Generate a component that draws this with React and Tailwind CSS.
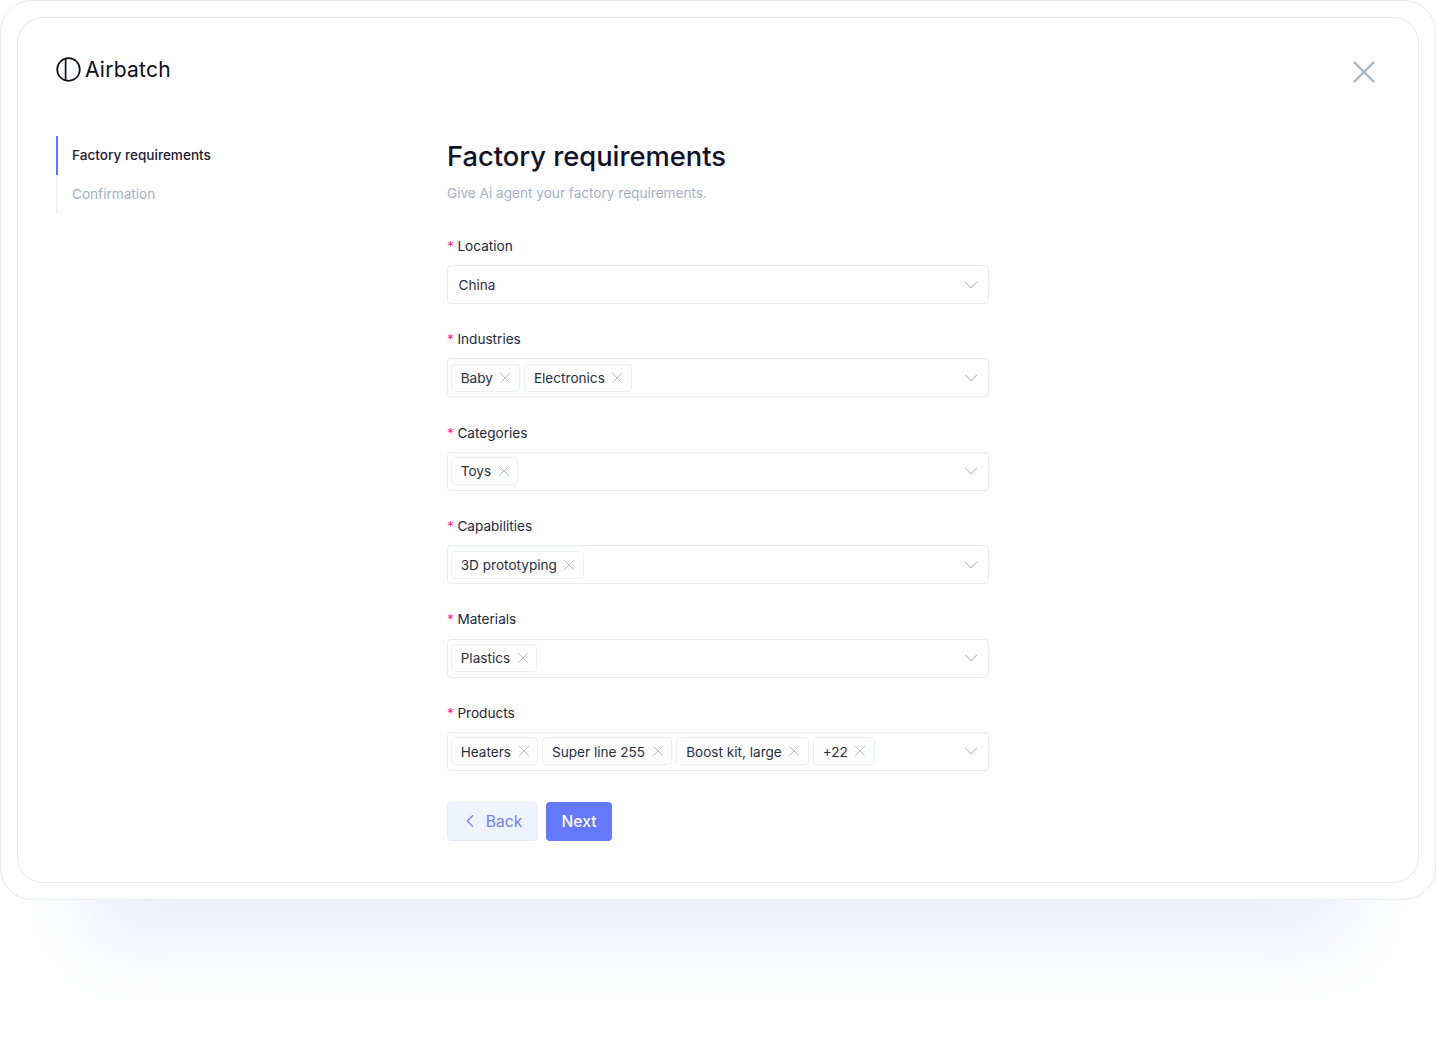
import { ChevronDown, ChevronLeft, X } from "lucide-react";

const fields = [
  { label: "Location", value: "China" },
  { label: "Industries", tags: ["Baby", "Electronics"] },
  { label: "Categories", tags: ["Toys"] },
  { label: "Capabilities", tags: ["3D prototyping"] },
  { label: "Materials", tags: ["Plastics"] },
  { label: "Products", tags: ["Heaters", "Super line 255", "Boost kit, large", "+22"] },
];

function Logo() {
  return (
    <div className="flex items-center gap-[4px] text-[#0b0d1e]">
      <svg width="25" height="25" viewBox="0 0 25 25" fill="none" stroke="currentColor" strokeWidth="1.7">
        <circle cx="12.5" cy="12.5" r="11.3" />
        <path d="M9.6 1.5v22" />
      </svg>
      <span className="h-[25px] text-[21px] leading-[25px] tracking-[0.25px]">Airbatch</span>
    </div>
  );
}

function Tag({ text }) {
  return (
    <span className="flex h-[28px] items-center gap-[3.5px] rounded-[4px] border border-[#edeff7] pl-[8.7px] pr-[4.8px] text-[13.6px] text-[#2a2e45]">
      <span className="pt-[0.8px]">{text}</span>
      <X size={18} strokeWidth={1.2} className="text-[#a9b3c9]" />
    </span>
  );
}

function Field({ field }) {
  return (
    <div className="mb-[25.4px]">
      <label className="mb-[9px] flex h-[20px] items-center text-[13.6px] text-[#23273c]">
        <span className="mr-[4.4px] w-[6px] text-[#ef2f88]">*</span>
        {field.label}
      </label>
      <div className="flex h-[39px] items-center justify-between rounded-[4px] border border-[#e8eaf3] pl-[3px] pr-[6.5px]">
        {field.value ? (
          <span className="pl-[7.5px] pt-[0.8px] text-[13.6px] text-[#2a2e45]">{field.value}</span>
        ) : (
          <div className="flex gap-[4px]">
            {field.tags.map((t) => (
              <Tag key={t} text={t} />
            ))}
          </div>
        )}
        <ChevronDown size={22} strokeWidth={1.1} className="text-[#a9b3c9]" />
      </div>
    </div>
  );
}

export default function App() {
  return (
    <div className="h-[1040px] w-[1436px] overflow-hidden bg-white font-['Inter',sans-serif]">
      <div className="h-[900px] rounded-[32px] border border-[#e7e8f5] bg-white p-[16px] shadow-[0_128px_70px_-88px_rgb(234,237,251)]">
        <div className="relative h-[866px] rounded-[26px] border border-[#e7e8f5] pl-[38px] pt-[39px]">
          <Logo />
          <button className="absolute right-[35px] top-[35px] text-[#a4b0c6]">
            <X size={38} strokeWidth={1.3} />
          </button>

          <div className="mt-[54px] flex">
            {/* steps */}
            <div className="w-[391px]">
              <div className="flex h-[39px] items-center border-l-2 border-[#6275f7] pl-[14px] text-[13.6px] font-medium text-[#1c2036]">
                Factory requirements
              </div>
              <div className="flex h-[39px] items-center border-l-2 border-[#f1f2f9] pl-[14px] text-[13.6px] text-[#a3afc9]">
                Confirmation
              </div>
            </div>

            {/* form */}
            <div className="w-[542px]">
              <h1 className="h-[40px] text-[27.3px] font-medium leading-[42px] text-[#0f1228]">
                Factory requirements
              </h1>
              <p className="mt-[7px] h-[20px] text-[13.6px] leading-[20px] text-[#a3afc9]">
                Give Ai agent your factory requirements.
              </p>
              <div className="mt-[33px]">
                {fields.map((f) => (
                  <Field key={f.label} field={f} />
                ))}
              </div>
              <div className="mt-[31px] flex gap-[8px] text-[15.6px]">
                <button className="flex h-[39px] w-[91px] items-center justify-center gap-[5px] rounded-[4px] border border-[#e5eafb] bg-[#eff3fe] pr-[4px] text-[#6f81f8]">
                  <ChevronLeft size={22} strokeWidth={1.2} />
                  Back
                </button>
                <button className="h-[39px] w-[66px] rounded-[4px] bg-[#6478f8] font-medium text-white">Next</button>
              </div>
            </div>
          </div>
        </div>
      </div>
    </div>
  );
}
